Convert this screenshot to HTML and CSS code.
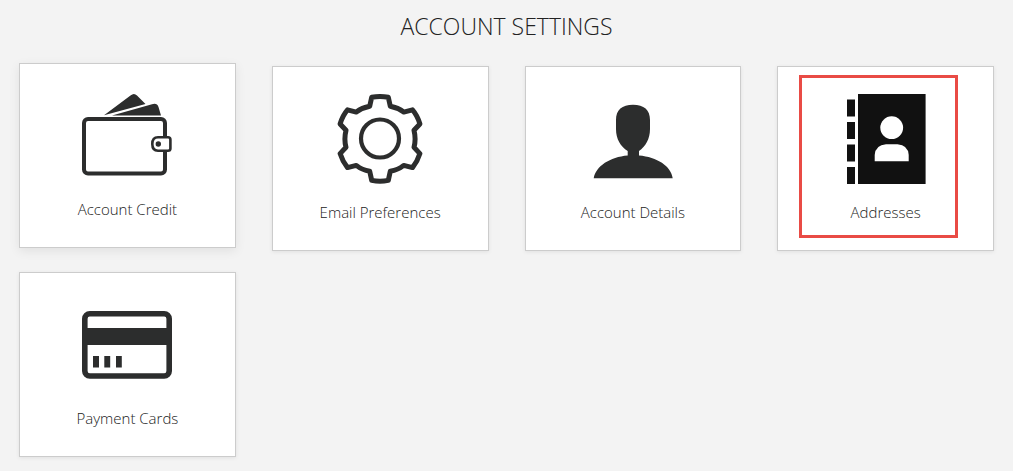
FILE: index.html
```html
<!DOCTYPE html>
<html lang="en">
<head>
    <meta charset="UTF-8">
    <meta name="viewport" content="width=device-width, initial-scale=1.0">
    <title>Account Settings</title>
    <link rel="stylesheet" href="styles.css">
</head>
<body>

<main class="settings">
    <h1>Account Settings</h1>
    <nav class="tiles" aria-label="Account settings">
        <a class="tile raised" href="#credit">
            <svg class="icon" viewBox="0 0 90 90" aria-hidden="true">
                <path d="M22 24.3L48.500 4.500Q52 1.500 55 4.500L63.500 13Z"/>
                <path d="M30 24.500L70 13.200Q75 11.500 76.500 16L79 24.500Z"/>
                <rect class="line" x="2" y="28" width="81" height="54.500" rx="4" stroke-width="4"/>
                <path class="line cutout" d="M76 46.3H86Q88.4 46.3 88.4 48.5V57.5Q88.4 59.7 86 59.7H76Q70.3 59.7 70.3 53Q70.3 46.3 76 46.3Z" stroke-width="2.6"/>
                <circle cx="76.3" cy="53" r="2.7"/>
            </svg>
            <span class="label">Account Credit</span>
        </a>
        <a class="tile" href="#email">
            <svg class="icon" viewBox="0 0 90 90" aria-hidden="true">
                <path class="line" stroke-width="5" d="M36.7 3.3Q45 1.7 53.3 3.3L55.3 12.3Q63 13.800 68.7 18.1L77.5 15.800Q82.5 21.5 84.9 30L79 36.3Q81.200 45 79 53.3L84.9 59.6Q82.5 67.5 77.5 73.6L68.7 71.4Q63 76 55.3 77.3L53.3 86.4Q45 88 36.7 86.4L34.7 77.3Q27 76 21.3 71.4L12.5 73.6Q7.5 67.5 5.1 59.6L11 53.3Q8.8 45 11 36.3L5.1 30Q7.5 21.5 12.5 15.8L21.3 18.1Q27 13.8 34.7 12.3Z"/>
                <circle class="line" cx="45" cy="44.5" r="19" stroke-width="4.2"/>
            </svg>
            <span class="label">Email Preferences</span>
        </a>
        <a class="tile" href="#details">
            <svg class="icon" viewBox="0 0 90 90" aria-hidden="true">
                <path d="M45 10.8C56 10.8 62 16 62 26V35C62 45 57.5 52.5 51 57V61.5C69 63 83 72 84.7 84.3H5.7C8 72 22 63 39.7 61.5V57C32.5 52.5 28 45 28 35V26C28 16 34 10.8 45 10.8Z"/>
            </svg>
            <span class="label">Account Details</span>
        </a>
        <a class="tile selected" href="#addresses">
            <svg class="icon book" viewBox="0 0 90 90" aria-hidden="true">
                <path d="M17 0H84.6V90H17ZM6 5.5H14V22.5H6ZM6 28H14V45H6ZM6 50.5H14V67.5H6ZM6 73H14V90H6Z"/>
                <circle class="cutout" cx="50.7" cy="33.7" r="11.4"/>
                <path class="cutout" d="M33.7 67.3V61Q34.5 51 45 50.3H56.5Q67 51 67.7 61V67.3Z"/>
            </svg>
            <span class="label">Addresses</span>
        </a>
        <a class="tile" href="#cards">
            <svg class="icon" viewBox="0 0 90 90" aria-hidden="true">
                <rect class="line" x="2.8" y="13.8" width="84.4" height="62.2" rx="5" stroke-width="5.6"/>
                <path d="M3 28H87V45H3ZM11 56H17V67.5H11ZM22.3 56H28.2V67.5H22.3ZM34 56H39.8V67.5H34Z"/>
            </svg>
            <span class="label">Payment Cards</span>
        </a>
    </nav>
</main>

</body>
</html>
```

FILE: styles.css
```css
* {
    box-sizing: border-box;
}
body {
    margin: 0;
    background-color: #f3f3f3;
    color: #222;
    font-family: "Open Sans", sans-serif;
    font-weight: 300;
}
.settings {
    padding: 10px 19px 14px;
}
h1 {
    margin: 0 0 24px;
    font-size: 23px;
    font-weight: 300;
    line-height: 32px;
    text-align: center;
    text-transform: uppercase;
}
.tiles {
    display: grid;
    grid-template-columns: repeat(4, 1fr);
    gap: 21px 36px;
}
.tile {
    position: relative;
    display: flex;
    flex-direction: column;
    align-items: center;
    gap: 18px;
    padding: 27px 10px 28px;
    border: 1px solid #ccc;
    background-color: #fff;
    box-shadow: 0 1px 4px rgba(0, 0, 0, 0.08);
    color: inherit;
    text-decoration: none;
}
.tile.raised,
.tile:hover {
    transform: translateY(-3px);
    box-shadow: 0 3px 10px rgba(0, 0, 0, 0.08);
}
/* red frame around the current tile's content */
.tile.selected::after {
    content: "";
    position: absolute;
    top: 8px;
    right: 35px;
    bottom: 12px;
    left: 21px;
    border: 3px solid #e94b45;
}
.icon {
    width: 90px;
    height: 90px;
    fill: #2c2d2d;
}
.icon.book {
    fill: #111;
}
.icon .line {
    fill: none;
    stroke: #2c2d2d;
    stroke-linejoin: round;
}
.icon .cutout {
    fill: #fff;
}
.label {
    font-size: 15px;
    line-height: 20px;
}
```
